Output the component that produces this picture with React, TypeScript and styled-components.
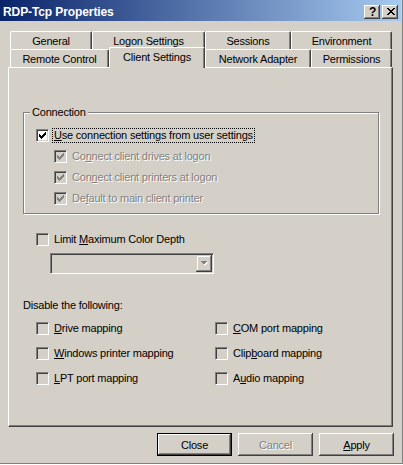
import React from 'react'
import styled, { createGlobalStyle, css } from 'styled-components'

const GlobalStyle = createGlobalStyle`
  html, body {
    margin: 0;
    padding: 0;
    background: #ffffff;
  }
  body {
    font-family: "Liberation Sans", Arial, sans-serif;
    font-size: 11px;
  }
`

const raised = css`
  box-shadow: inset -1px -1px 0 #404040, inset 1px 1px 0 #ffffff,
    inset -2px -2px 0 #808080, inset 2px 2px 0 #d4d0c8;
`

const Window = styled.div`
  width: 403px;
  height: 464px;
  box-sizing: border-box;
  background: #d4d0c8;
  border-right: 1px solid #808080;
  border-bottom: 1px solid #808080;
  display: flex;
  flex-direction: column;
  color: #000;
  font-family: "Liberation Sans", Arial, sans-serif;
  font-size: 11px;
  letter-spacing: -0.2px;
`

const TitleBar = styled.div`
  height: 21px;
  margin-right: 1px;
  padding: 2px 3px 0 3px;
  box-sizing: border-box;
  display: flex;
  align-items: center;
  background: linear-gradient(to right, #0a246a, #a6caf0);
`

const Title = styled.div`
  flex: 1;
  color: #fff;
  font-weight: bold;
  font-size: 12px;
  letter-spacing: -0.1px;
`

const CaptionButton = styled.span<{ $gap?: number }>`
  width: 16px;
  height: 14px;
  margin-left: ${p => p.$gap ?? 0}px;
  box-sizing: border-box;
  display: flex;
  align-items: center;
  justify-content: center;
  background: #d4d0c8;
  font-weight: bold;
  font-size: 12px;
  line-height: 14px;
  padding-left: 1px;
  ${raised}
`

const TabStrip = styled.div`
  margin: 10px 0 0 10px;
  display: flex;
  flex-direction: column;
`

const TabRow = styled.div`
  display: flex;
  align-items: flex-end;
  height: 18px;
`

const Tab = styled.div<{ $w: number; $active?: boolean }>`
  position: relative;
  z-index: ${p => (p.$active ? 2 : 1)};
  width: ${p => p.$w}px;
  height: ${p => (p.$active ? 21 : 18)}px;
  margin-bottom: ${p => (p.$active ? -1 : 0)}px;
  box-sizing: border-box;
  padding-top: 3px;
  display: flex;
  justify-content: center;
  background: #d4d0c8;
  border-top: 1px solid #fff;
  border-left: 1px solid #fff;
  border-right: 1px solid #404040;
  border-radius: 2px 2px 0 0;
  box-shadow: inset -1px 0 0 #808080;
  line-height: 13px;
`

const Panel = styled.div`
  margin-left: 8px;
  width: 385px;
  height: 360px;
  box-sizing: border-box;
  padding: 38px 0 0 14px;
  border-top: 1px solid #fff;
  border-left: 1px solid #fff;
  border-right: 1px solid #404040;
  border-bottom: 1px solid #404040;
  box-shadow: inset -1px -1px 0 #808080;
`

const Group = styled.fieldset`
  margin: 0;
  padding: 0 0 7px 0;
  min-width: 0;
  width: 356px;
  box-sizing: border-box;
  border: 1px solid #808080;
  box-shadow: inset 1px 1px 0 #fff, 1px 1px 0 #fff;
`

const Legend = styled.legend`
  margin-left: 6px;
  padding: 0 2px;
  line-height: 13px;
  background: #d4d0c8;
`

const GroupBody = styled.div`
  display: flex;
  flex-direction: column;
  gap: 6px;
  padding-top: 9px;
`

const CheckRow = styled.div<{ $indent: number; $top?: number }>`
  display: flex;
  align-items: center;
  height: 15px;
  padding-left: ${p => p.$indent}px;
  margin-top: ${p => p.$top ?? 0}px;
`

const Box = styled.span<{ $grey?: boolean }>`
  width: 13px;
  height: 13px;
  flex: none;
  box-sizing: border-box;
  display: flex;
  align-items: center;
  justify-content: center;
  border: 1px solid;
  border-color: #808080 #fff #fff #808080;
  box-shadow: inset 1px 1px 0 #404040, inset -1px -1px 0 #d4d0c8;
  background: ${p => (p.$grey ? '#d4d0c8' : '#fff')};
`

const Label = styled.span<{ $disabled?: boolean; $focus?: boolean }>`
  margin-left: 3px;
  padding: 0 1px;
  line-height: 13px;
  white-space: nowrap;
  border: 1px dotted ${p => (p.$focus ? '#000' : 'transparent')};
  color: ${p => (p.$disabled ? '#808080' : '#000')};
  text-shadow: ${p => (p.$disabled ? '1px 1px 0 #fff' : 'none')};
`

const Combo = styled.div`
  width: 164px;
  height: 21px;
  margin: 6px 0 0 27px;
  box-sizing: border-box;
  padding: 1px;
  display: flex;
  justify-content: flex-end;
  background: #d4d0c8;
  border: 1px solid;
  border-color: #808080 #fff #fff #808080;
  box-shadow: inset 1px 1px 0 #404040, inset -1px -1px 0 #d4d0c8;
`

const DropButton = styled.span`
  width: 16px;
  height: 17px;
  box-sizing: border-box;
  display: flex;
  align-items: center;
  justify-content: center;
  box-shadow: inset -1px -1px 0 #404040, inset 1px 1px 0 #d4d0c8,
    inset -2px -2px 0 #808080, inset 2px 2px 0 #fff;
`

const Caption = styled.div`
  margin-top: 25px;
  line-height: 13px;
`

const OptionGrid = styled.div`
  display: grid;
  grid-template-columns: 179px 1fr;
  row-gap: 10px;
  margin-top: 9px;
  padding-left: 13px;
`

const ButtonBar = styled.div`
  display: flex;
  justify-content: flex-end;
  gap: 6px;
  margin-top: 6px;
  padding-right: 8px;
`

const Button = styled.button<{ $default?: boolean }>`
  width: 75px;
  height: 23px;
  margin: 0;
  padding: 0;
  box-sizing: border-box;
  font: inherit;
  letter-spacing: inherit;
  color: #000;
  background: #d4d0c8;
  border: ${p => (p.$default ? '1px solid #000' : 'none')};
  ${raised}
  &:disabled {
    color: #808080;
    text-shadow: 1px 1px 0 #fff;
  }
`

const CHECK_TOPS = [2, 3, 4, 3, 2, 1, 0]

const CheckMark: React.FC<{ color: string }> = ({ color }) => (
  <svg width="7" height="7" viewBox="0 0 7 7" shapeRendering="crispEdges">
    {CHECK_TOPS.map((y, x) => (
      <rect key={x} x={x} y={y} width="1" height="3" fill={color} />
    ))}
  </svg>
)

const X_ROWS = [[0, 1, 6, 7], [1, 2, 5, 6], [2, 3, 4, 5], [3, 4], [2, 3, 4, 5], [1, 2, 5, 6], [0, 1, 6, 7]]

const CloseGlyph = () => (
  <svg width="8" height="7" viewBox="0 0 8 7" shapeRendering="crispEdges">
    {X_ROWS.map((cols, y) =>
      cols.map(x => <rect key={`${x}-${y}`} x={x} y={y} width="1" height="1" fill="#000" />)
    )}
  </svg>
)

const DropArrow = () => (
  <svg width="8" height="5" viewBox="0 0 8 5" shapeRendering="crispEdges">
    <polygon points="1,1 8,1 4.5,4.5" fill="#fff" />
    <polygon points="0,0 7,0 3.5,3.5" fill="#808080" />
  </svg>
)

type CheckProps = {
  label: React.ReactNode
  indent: number
  checked?: boolean
  disabled?: boolean
  grey?: boolean
  focus?: boolean
  top?: number
}

const Check: React.FC<CheckProps> = ({ label, indent, checked, disabled, grey, focus, top }) => (
  <CheckRow $indent={indent} $top={top}>
    <Box $grey={grey || disabled}>{checked && <CheckMark color={disabled ? '#808080' : '#000'} />}</Box>
    <Label $disabled={disabled} $focus={focus}>{label}</Label>
  </CheckRow>
)

const backRow = [
  { name: 'General', w: 82 },
  { name: 'Logon Settings', w: 113 },
  { name: 'Sessions', w: 86 },
  { name: 'Environment', w: 101 },
]

const frontRow = [
  { name: 'Remote Control', w: 99 },
  { name: 'Client Settings', w: 96, active: true },
  { name: 'Network Adapter', w: 106 },
  { name: 'Permissions', w: 81 },
]

const App: React.FC = () => (
  <>
    <GlobalStyle />
    <Window>
      <TitleBar>
        <Title>RDP-Tcp Properties</Title>
        <CaptionButton>?</CaptionButton>
        <CaptionButton $gap={2}>
          <CloseGlyph />
        </CaptionButton>
      </TitleBar>

      <TabStrip>
        <TabRow>
          {backRow.map(t => (
            <Tab key={t.name} $w={t.w}>{t.name}</Tab>
          ))}
        </TabRow>
        <TabRow>
          {frontRow.map(t => (
            <Tab key={t.name} $w={t.w} $active={t.active}>{t.name}</Tab>
          ))}
        </TabRow>
      </TabStrip>

      <Panel>
        <Group>
          <Legend>Connection</Legend>
          <GroupBody>
            <Check indent={12} checked focus label={<><u>U</u>se connection settings from user settings</>} />
            <Check indent={30} checked disabled label={<>Co<u>n</u>nect client drives at logon</>} />
            <Check indent={30} checked disabled label={<>Con<u>n</u>ect client printers at logon</>} />
            <Check indent={30} checked disabled label={<>De<u>f</u>ault to main client printer</>} />
          </GroupBody>
        </Group>

        <Check indent={13} top={18} grey label={<>Limit <u>M</u>aximum Color Depth</>} />
        <Combo>
          <DropButton>
            <DropArrow />
          </DropButton>
        </Combo>

        <Caption>Disable the following:</Caption>
        <OptionGrid>
          <Check indent={0} grey label={<><u>D</u>rive mapping</>} />
          <Check indent={0} grey label={<><u>C</u>OM port mapping</>} />
          <Check indent={0} grey label={<><u>W</u>indows printer mapping</>} />
          <Check indent={0} grey label={<>Clip<u>b</u>oard mapping</>} />
          <Check indent={0} grey label={<><u>L</u>PT port mapping</>} />
          <Check indent={0} grey label={<>A<u>u</u>dio mapping</>} />
        </OptionGrid>
      </Panel>

      <ButtonBar>
        <Button $default>Close</Button>
        <Button disabled>Cancel</Button>
        <Button><u>A</u>pply</Button>
      </ButtonBar>
    </Window>
  </>
)

export default App
